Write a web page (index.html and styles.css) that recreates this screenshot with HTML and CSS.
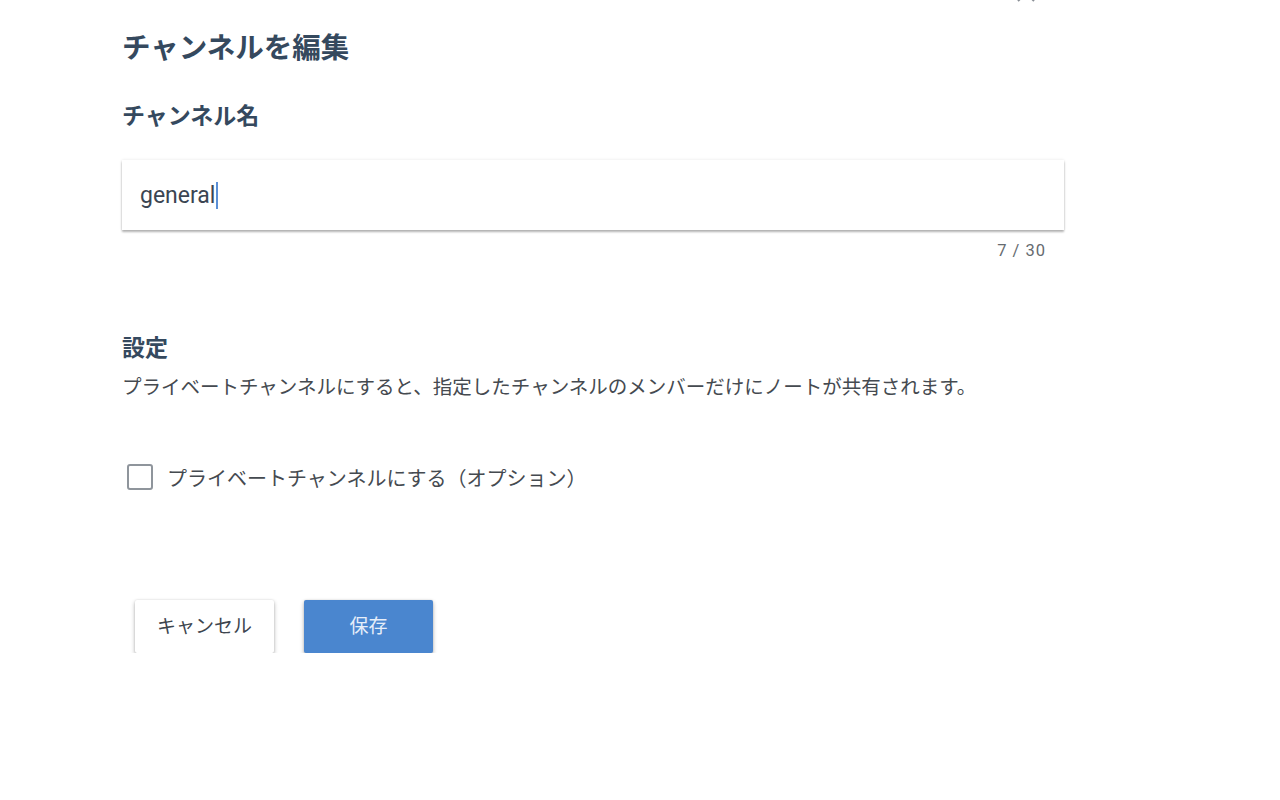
FILE: index.html
```html
<!DOCTYPE html>
<html lang="ja">
<head>
<meta charset="utf-8">
<title>チャンネルを編集</title>
<link rel="stylesheet" href="styles.css">
</head>
<body>
<svg class="close-icon" width="20" height="20" viewBox="0 0 20 20" aria-hidden="true"><path d="M2 2 L18 18 M18 2 L2 18" stroke="#8a8f96" stroke-width="2" fill="none"/></svg>
<main class="page">
  <h1 class="title">チャンネルを編集</h1>
  <h2 class="label">チャンネル名</h2>
  <div class="field">
    <div class="input" role="textbox">general<span class="caret"></span></div>
  </div>
  <div class="counter">7 / 30</div>
  <h2 class="label settings">設定</h2>
  <p class="desc">プライベートチャンネルにすると、指定したチャンネルのメンバーだけにノートが共有されます。</p>
  <label class="check-row">
    <span class="checkbox"></span>
    <span class="check-label">プライベートチャンネルにする（オプション）</span>
  </label>
  <div class="actions">
    <button class="btn btn-cancel">キャンセル</button>
    <button class="btn btn-save">保存</button>
  </div>
</main>
</body>
</html>
```
FILE: styles.css
```css
html, body {
  margin: 0;
  padding: 0;
  background: #ffffff;
}
body {
  font-family: Roboto, "Noto Sans CJK JP", sans-serif;
  color: #35495e;
}
.close-icon {
  position: absolute;
  left: 1016px;
  top: -17px;
}
.page {
  width: 942px;
  margin-left: 122px;
  padding-top: 29px;
}
.title {
  margin: 0;
  font-size: 28.5px;
  line-height: 40px;
  font-weight: 700;
  color: #35495e;
}
.label {
  margin: 32px 0 0;
  font-size: 23px;
  line-height: 32px;
  font-weight: 700;
  color: #35495e;
}
.field {
  margin-top: 27px;
}
.input {
  height: 70px;
  box-sizing: border-box;
  padding-left: 18px;
  display: flex;
  align-items: center;
  font-size: 23px;
  color: #3b4552;
  background: #fff;
  box-shadow: 0 2px 2px rgba(0,0,0,0.28), 0 0 3px rgba(0,0,0,0.1);
}
.caret {
  display: inline-block;
  width: 2px;
  height: 27px;
  background: #5b8fd6;
  margin-left: 1px;
}
.counter {
  margin-top: 10px;
  padding-right: 18px;
  text-align: right;
  font-size: 16.5px;
  line-height: 21px;
  letter-spacing: 1px;
  color: #666b70;
}
.settings {
  margin-top: 72px;
}
.desc {
  margin: 9px 0 0;
  font-size: 19.5px;
  line-height: 28px;
  color: #454a50;
}
.check-row {
  margin-top: 61px;
  display: flex;
  align-items: center;
  height: 28px;
  padding-left: 5px;
}
.checkbox {
  width: 26px;
  height: 26px;
  box-sizing: border-box;
  border: 2px solid #8f959c;
  border-radius: 3px;
  flex: none;
}
.check-label {
  margin-left: 14px;
  font-size: 20px;
  color: #454a50;
}
.actions {
  margin-top: 109px;
  padding-left: 13px;
  display: flex;
  gap: 30px;
}
.btn {
  height: 53px;
  padding: 0 0 4px;
  border: none;
  border-radius: 2px;
  font-family: Roboto, "Noto Sans CJK JP", sans-serif;
  font-size: 19px;
  cursor: pointer;
  box-shadow: 0 2px 4px rgba(0,0,0,0.3), 0 0 2px rgba(0,0,0,0.12);
}
.btn-cancel {
  width: 139px;
  background: #ffffff;
  color: #3d454e;
}
.btn-save {
  width: 129px;
  background: #4a86cf;
  color: #e6eef9;
}
```
